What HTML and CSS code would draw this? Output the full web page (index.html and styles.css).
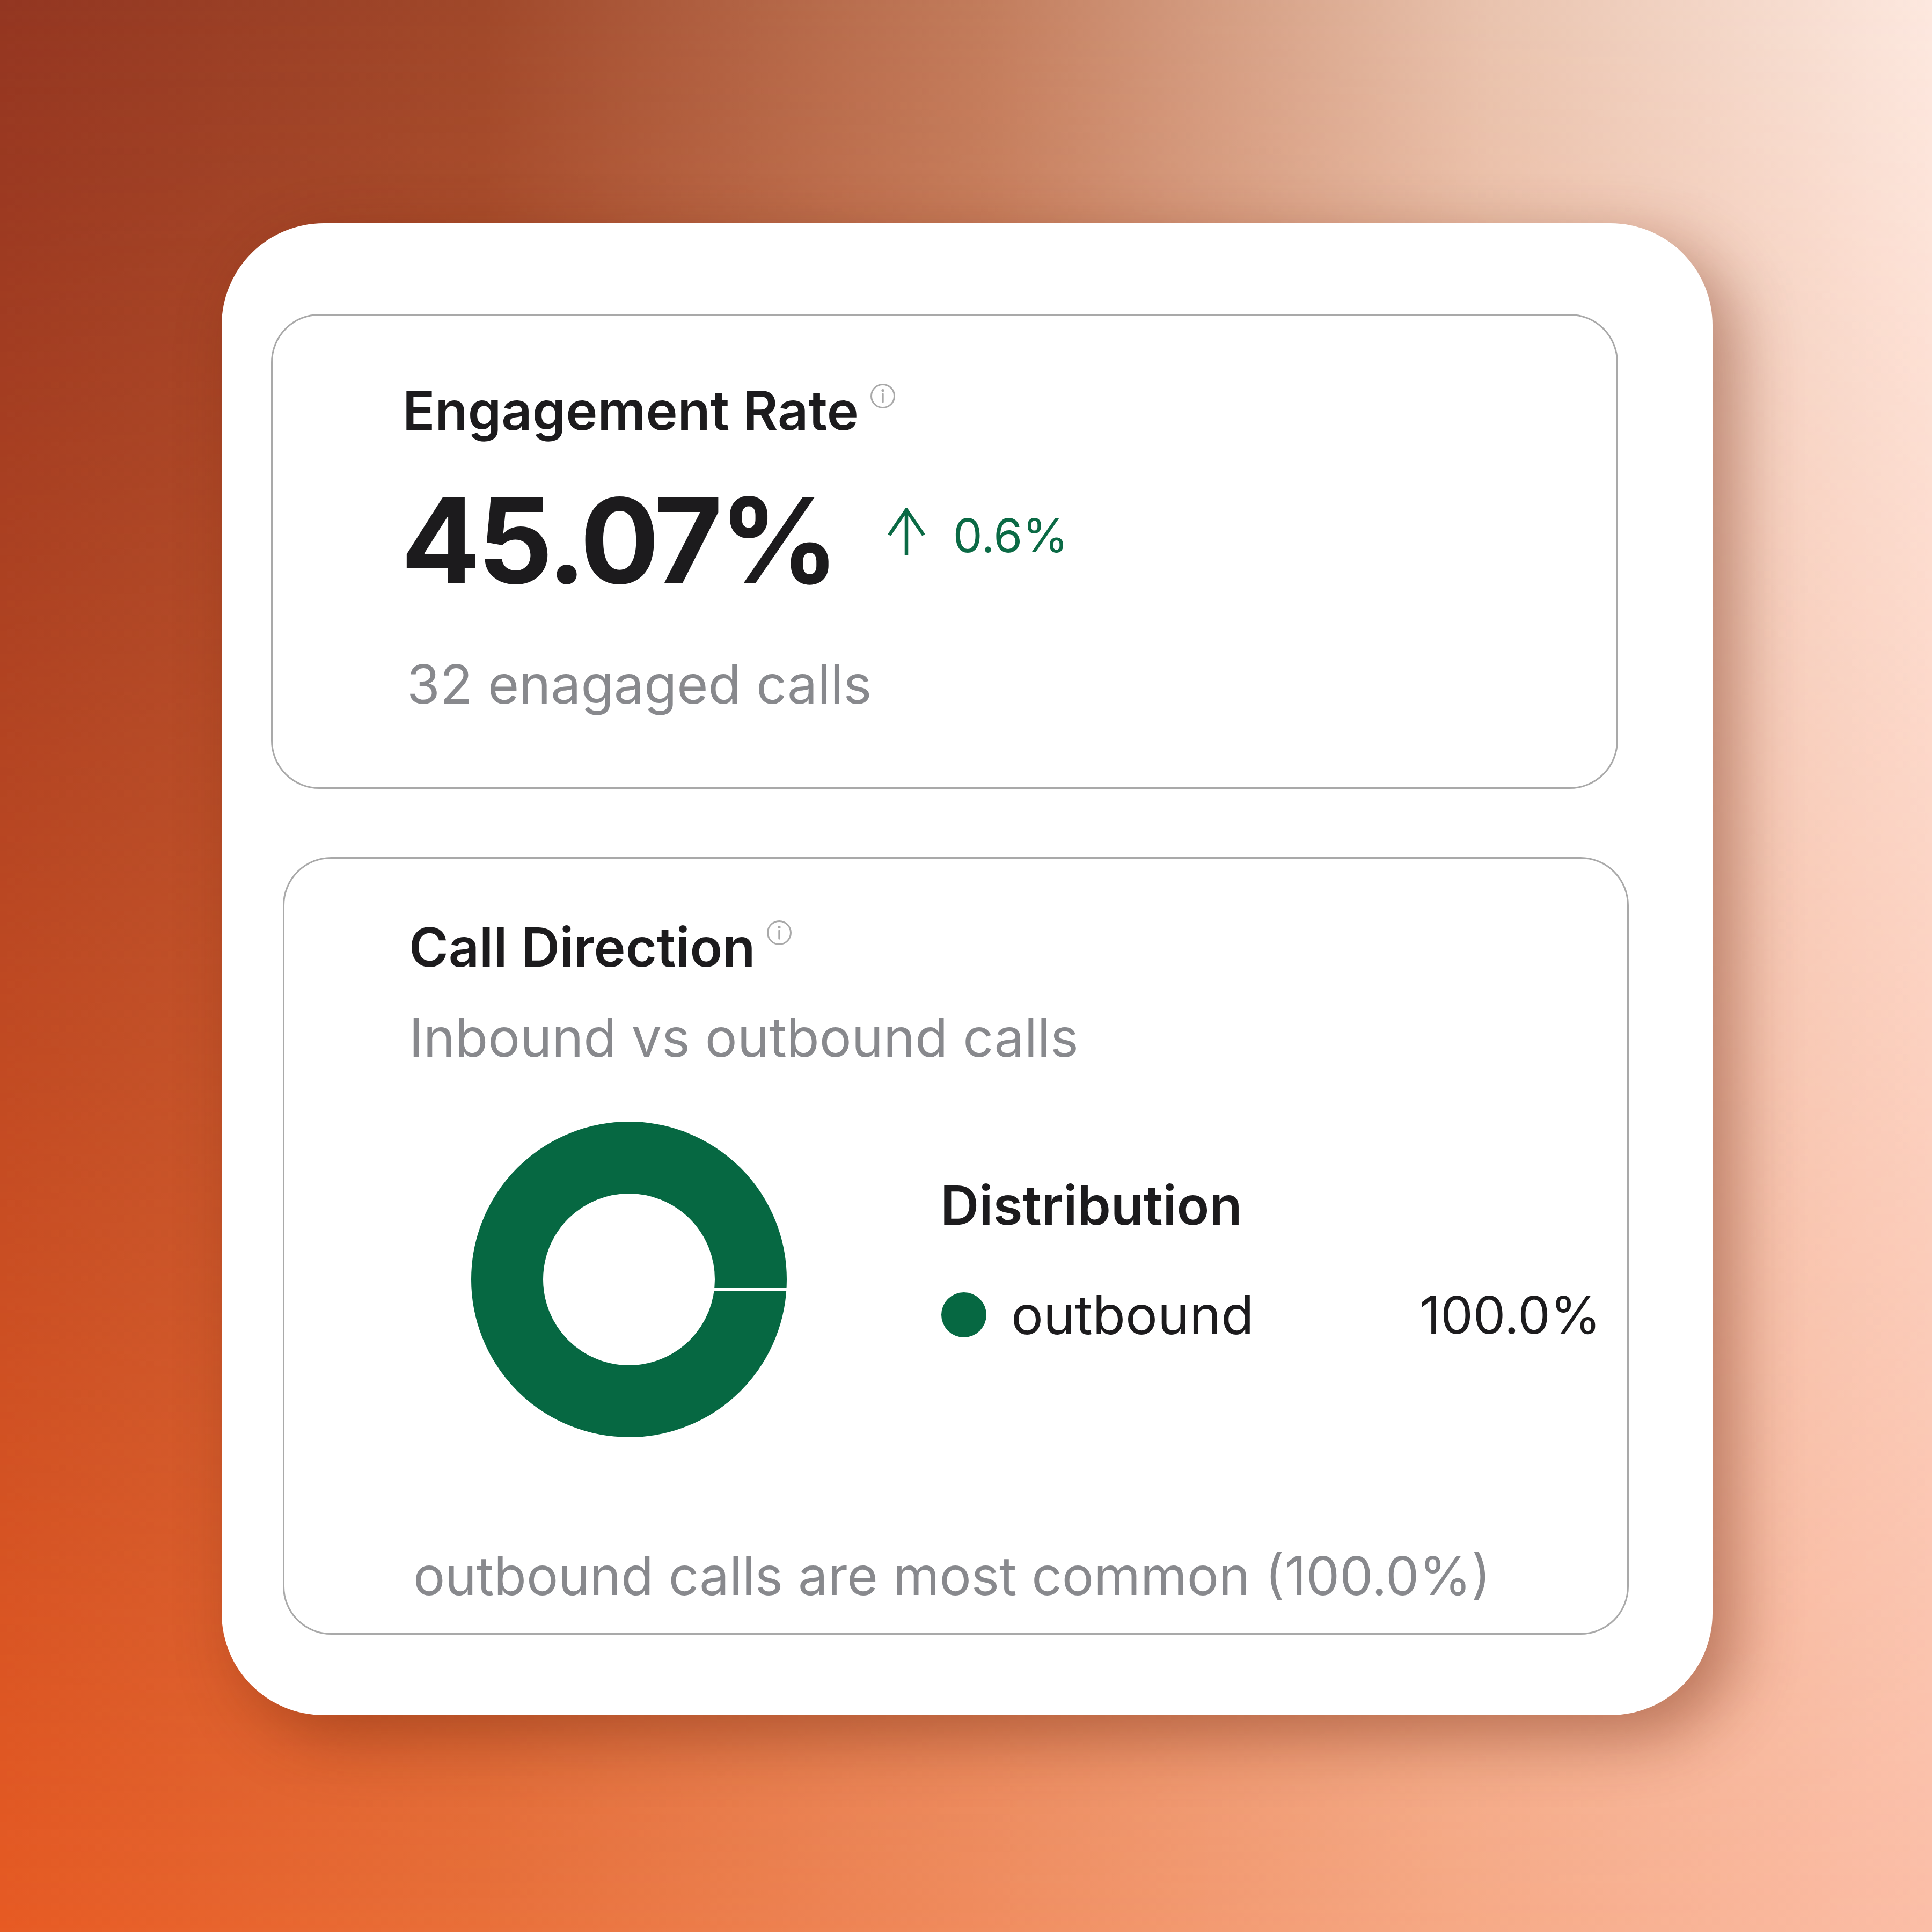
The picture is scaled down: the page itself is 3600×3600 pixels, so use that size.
FILE: index.html
```html
<!DOCTYPE html>
<html lang="en">
<head>
<meta charset="utf-8">
<title>Call Analytics</title>
<link rel="stylesheet" href="styles.css">
</head>
<body>
<div class="page">
  <div class="panel">
    <section class="card card-rate">
      <div class="title-row">
        <h2 class="title">Engagement Rate</h2>
        <svg class="info" viewBox="0 0 46 46" aria-hidden="true">
          <circle cx="23" cy="23" r="21.5" fill="none" stroke="#a9a9a9" stroke-width="3"/>
          <circle cx="23" cy="12.5" r="2.6" fill="#a9a9a9"/>
          <line x1="23" y1="19" x2="23" y2="34" stroke="#a9a9a9" stroke-width="3.4" stroke-linecap="round"/>
        </svg>
      </div>
      <div class="metric-row">
        <span class="metric">45.07%</span>
        <svg class="arrow" viewBox="0 0 74 88" aria-hidden="true">
          <path d="M37 5 V88 M5 51 L37 4 L69 51" fill="none" stroke="#0b6a45" stroke-width="6.5"/>
        </svg>
        <span class="delta">0.6%</span>
      </div>
      <p class="sub sub-rate">32 enagaged calls</p>
    </section>

    <section class="card card-direction">
      <div class="title-row">
        <h2 class="title">Call Direction</h2>
        <svg class="info" viewBox="0 0 46 46" aria-hidden="true">
          <circle cx="23" cy="23" r="21.5" fill="none" stroke="#a9a9a9" stroke-width="3"/>
          <circle cx="23" cy="12.5" r="2.6" fill="#a9a9a9"/>
          <line x1="23" y1="19" x2="23" y2="34" stroke="#a9a9a9" stroke-width="3.4" stroke-linecap="round"/>
        </svg>
      </div>
      <p class="sub sub-direction">Inbound vs outbound calls</p>
      <div class="chart-row">
        <svg class="donut" viewBox="0 0 588 588" aria-hidden="true">
          <circle cx="294" cy="294" r="227" fill="none" stroke="#066842" stroke-width="134"/>
          <line x1="450" y1="313" x2="590" y2="313" stroke="#ffffff" stroke-width="6"/>
        </svg>
        <div class="legend">
          <h3 class="legend-title">Distribution</h3>
          <div class="legend-row">
            <span class="legend-label"><span class="dot"></span>outbound</span>
            <span class="legend-value">100.0%</span>
          </div>
        </div>
      </div>
      <p class="sub footer">outbound calls are most common (100.0%)</p>
    </section>
  </div>
</div>
</body>
</html>
```

FILE: styles.css
```css
html, body {
  margin: 0;
  padding: 0;
}

body {
  font-family: "Inter", "Noto Sans", "Liberation Sans", sans-serif;
  color: #1c1b1d;
}

.page {
  position: relative;
  width: 3600px;
  height: 3600px;
  box-sizing: border-box;
  padding: 416px 0 0 413px;
  background: linear-gradient(to right, #e75b24 0%, #e9703a 25%, #f08c5e 50%, #f6a985 75%, #fbbea7 100%);
  overflow: hidden;
}

.page::before {
  content: "";
  position: absolute;
  inset: 0;
  background: linear-gradient(to right, #933621 0%, #a0482a 25%, #c27c5c 51%, #e9c3ae 77%, #fde8df 100%);
  -webkit-mask-image: linear-gradient(to bottom, #000 0%, rgba(0,0,0,0.55) 45%, transparent 100%);
  mask-image: linear-gradient(to bottom, #000 0%, rgba(0,0,0,0.55) 45%, transparent 100%);
}

.panel {
  position: relative;
  width: 2778px;
  height: 2780px;
  box-sizing: border-box;
  padding-top: 169px;
  background: #ffffff;
  border-radius: 190px;
  box-shadow: 40px 40px 120px rgba(110, 35, 10, 0.45);
  display: flex;
  flex-direction: column;
}

.card {
  box-sizing: border-box;
  border: 3px solid #a9a9a9;
  border-radius: 90px;
  background: #ffffff;
  display: flex;
  flex-direction: column;
  align-items: flex-start;
}

.card-rate {
  margin-left: 92px;
  width: 2510px;
  height: 885px;
  padding: 117px 0 0 242px;
}

.card-direction {
  margin-left: 114px;
  margin-top: 127px;
  width: 2508px;
  height: 1449px;
  padding: 105px 0 0 232px;
}

.title-row {
  display: flex;
  align-items: flex-start;
}

.title {
  margin: 0;
  font-size: 100px;
  line-height: 120px;
  font-weight: 600;
  color: #1c1b1d;
}

.info {
  width: 46px;
  height: 46px;
  margin-left: 22px;
  margin-top: 10px;
}

.metric-row {
  display: flex;
  align-items: flex-start;
  margin-top: 50px;
  margin-left: -3px;
}

.metric {
  font-size: 220px;
  line-height: 264px;
  font-weight: 700;
  color: #1c1b1d;
  letter-spacing: -6px;
}

.arrow {
  width: 74px;
  height: 88px;
  margin-top: 71px;
  margin-left: 94px;
}

.delta {
  font-size: 87px;
  line-height: 104px;
  margin-top: 71px;
  margin-left: 50px;
  color: #0b6a45;
  font-weight: 400;
}

.sub {
  margin: 0;
  font-size: 100px;
  line-height: 120px;
  font-weight: 400;
  color: #88898d;
}

.sub-rate {
  margin-top: 76px;
  margin-left: 8px;
}

.sub-direction {
  margin-top: 48px;
}

.chart-row {
  display: flex;
  align-items: flex-start;
  margin-top: 97px;
  margin-left: 116px;
}

.donut {
  width: 588px;
  height: 588px;
  flex: none;
}

.legend {
  margin-left: 286px;
  margin-top: 96px;
  width: 1231px;
  display: flex;
  flex-direction: column;
}

.legend-title {
  margin: 0;
  font-size: 100px;
  line-height: 120px;
  font-weight: 600;
  color: #1c1b1d;
}

.legend-row {
  margin-top: 84px;
  display: flex;
  align-items: center;
  justify-content: space-between;
  font-size: 100px;
  line-height: 120px;
  color: #1c1b1d;
}

.legend-label {
  display: flex;
  align-items: center;
}

.legend-value {
  font-size: 96px;
}

.dot {
  width: 84px;
  height: 84px;
  border-radius: 50%;
  background: #066842;
  margin-left: 2px;
  margin-right: 46px;
}

.footer {
  margin-top: 198px;
  margin-left: 8px;
  font-size: 99px;
}
```
